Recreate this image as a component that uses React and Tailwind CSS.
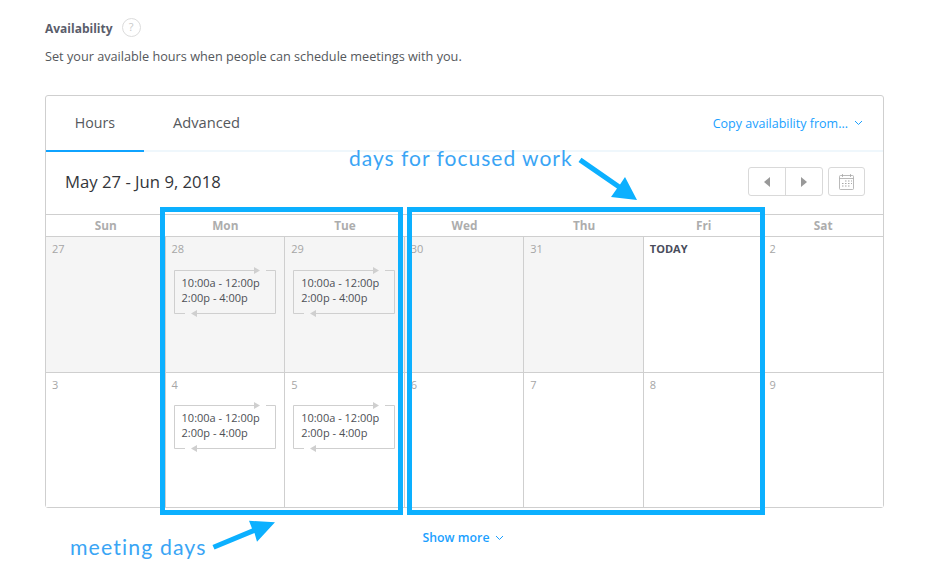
import React from "react";

const Chev = ({ className }) => (
  <svg width="9" height="6" viewBox="0 0 9 6" className={className} fill="none" stroke="currentColor" strokeWidth="1">
    <path d="M1 1l3.5 3.5L8 1" />
  </svg>
);

function Slot({ second }) {
  return (
    <div className={`relative ml-[8px] ${second ? "mt-[14px]" : "mt-[15px]"} w-[102px] h-[44px] text-[11px] leading-[15px] text-[#4d5055] pl-[8px] pt-[5px]`}>
      <svg className="absolute left-0 top-0 overflow-visible" width="102" height="44" viewBox="0 0 102 44" fill="none">
        <path d="M81 .5H.5v43H11M92 .5h9.500v43H22" stroke="#cfcfcf" />
        <path d="M80 -3l6 3.500-6 3.500zM23 40l-6 3.500 6 3.500z" fill="#cfcfcf" />
      </svg>
      <div>10:00a - 12:00p</div>
      <div>2:00p - 4:00p</div>
    </div>
  );
}

function Cell({ n, gray, slot, today, last, lastRow }) {
  return (
    <div className={`min-w-0 ${gray ? "bg-[#f5f5f5]" : "bg-white"} ${last ? "" : "border-r border-[#cfcfcf]"} ${lastRow ? "" : "border-b border-[#cfcfcf]"}`}>
      <div className={`pl-[6px] pt-[5px] h-[18px] text-[11px] leading-[14px] ${today ? "font-bold text-[#4a4d5c]" : "text-[#a6a6a6]"}`}>{n}</div>
      {slot && <Slot second={lastRow} />}
    </div>
  );
}

const Days = ["Sun", "Mon", "Tue", "Wed", "Thu", "Fri", "Sat"];
const Row1 = [
  { n: "27", gray: true },
  { n: "28", gray: true, slot: true },
  { n: "29", gray: true, slot: true },
  { n: "30", gray: true },
  { n: "31", gray: true },
  { n: "TODAY", today: true },
  { n: "2", last: true },
];
const Row2 = [
  { n: "3" },
  { n: "4", slot: true },
  { n: "5", slot: true },
  { n: "6" },
  { n: "7" },
  { n: "8" },
  { n: "9", last: true },
];

export default function App() {
  return (
    <div className="relative w-[930px] h-[575px] overflow-hidden bg-white pl-[45px] pr-[46px] pt-[20px] font-['Open_Sans',sans-serif] text-[#4d5055]">
      <div className="flex items-center h-[17px]">
        <span className="text-[12px] font-bold text-[#5a5d6b]">Availability</span>
        <span className="ml-[9px] -mt-[3px] flex items-center justify-center w-[19px] h-[19px] rounded-full border border-[#dcdcdc] text-[11px] text-[#c9c9c9]">?</span>
      </div>
      <p className="mt-[11px] h-[16px] text-[12.7px] leading-[16px] text-[#55585c] whitespace-nowrap">Set your available hours when people can schedule meetings with you.</p>

      <div className="mt-[31px] h-[413px] w-[839px] rounded-[3px] border border-[#cfcfcf] flex flex-col">
        <div className="flex items-stretch h-[56px] border-b-2 border-[#eff7fc] shrink-0">
          <div className="relative w-[98px] flex items-center justify-center pb-[1px] text-[14.2px] text-[#55585c]">
            Hours
            <div className="absolute left-0 right-0 -bottom-[2px] h-[2px] bg-[#0fa3ff]" />
          </div>
          <div className="ml-[29px] flex items-center pb-[1px] text-[14.7px] text-[#55585c]">Advanced</div>
          <div className="ml-auto mr-[20px] pt-[2px] flex items-center text-[12.5px] text-[#1a9fff]">
            Copy availability from...
            <Chev className="ml-[6px] -mt-[2px]" />
          </div>
        </div>

        <div className="flex items-center h-[62px] shrink-0 pl-[19px] pr-[18px] pb-[3px]">
          <span className="text-[16.7px] text-[#33353a]">May 27 - Jun 9, 2018</span>
          <div className="ml-auto flex items-center gap-[5px]">
            <div className="flex h-[29px] w-[75px] rounded-[3px] border border-[#d9d9d9]">
              <div className="flex-1 flex items-center justify-center border-r border-[#d9d9d9]">
                <svg width="6" height="10" viewBox="0 0 6 10"><path d="M6 0v10L0 5z" fill="#999" /></svg>
              </div>
              <div className="flex-1 flex items-center justify-center">
                <svg width="6" height="10" viewBox="0 0 6 10"><path d="M0 0v10l6-5z" fill="#999" /></svg>
              </div>
            </div>
            <div className="flex h-[29px] w-[37px] items-center justify-center rounded-[3px] border border-[#d9d9d9]">
              <svg width="15" height="16" viewBox="0 0 15 16" fill="none" stroke="#a8a8a8" strokeWidth="0.8">
                <rect x="0.500" y="1.500" width="14" height="14" rx="1" />
                <path d="M.5 4.500h14M3.500 0v3M11.500 0v3" />
                <path d="M6 7h1.500M9 7h1.500M12 7h1M3 9.500h1.500M6 9.500h1.500M9 9.500h1.500M12 9.500h1M3 12h1.500M6 12h1.500M9 12h1.500" strokeWidth="1.200" />
              </svg>
            </div>
          </div>
        </div>

        <div className="grid grid-cols-7 h-[23px] shrink-0 border-y border-[#cfcfcf] items-center text-center text-[11.8px] font-bold text-[#adadad]">
          {Days.map((d) => <div key={d}>{d}</div>)}
        </div>

        <div className="grid grid-cols-7 h-[136px] shrink-0">
          {Row1.map((c) => <Cell key={c.n} {...c} />)}
        </div>
        <div className="grid grid-cols-7 flex-1">
          {Row2.map((c) => <Cell key={c.n} {...c} lastRow />)}
        </div>
      </div>

      <div className="mt-[21px] flex w-[837px] items-center justify-center text-[12.3px] text-[#1a9fff] font-semibold">
        Show more
        <Chev className="ml-[6px]" />
      </div>

      {/* annotations drawn over the screenshot */}
      <div className="absolute left-[160px] top-[207px] w-[243px] h-[308px] border-[5px] border-[#0cb0ff] pointer-events-none" />
      <div className="absolute left-[407px] top-[207px] w-[358px] h-[308px] border-[5px] border-[#0cb0ff] pointer-events-none" />
      <div className="absolute left-[349px] top-[144px] text-[21px] leading-[28px] text-[#3aa5f5] font-['Lato',sans-serif] tracking-[1px] whitespace-nowrap">days for focused work</div>
      <div className="absolute left-[70px] top-[533px] text-[21.3px] leading-[28px] text-[#3aa5f5] font-['Lato',sans-serif] tracking-[1.100px] whitespace-nowrap">meeting days</div>
      <svg className="absolute left-0 top-0 pointer-events-none" width="930" height="575" fill="#0cb0ff">
        <path d="M581.500 157.800L578.500 162L617 188.500L611 197L637 200L625 177L620 184.500Z" />
        <path d="M212.500 545L214.500 549.500L254.500 533L257 541.700L275 522.300L249 520.700L252 528.500Z" />
      </svg>
    </div>
  );
}
